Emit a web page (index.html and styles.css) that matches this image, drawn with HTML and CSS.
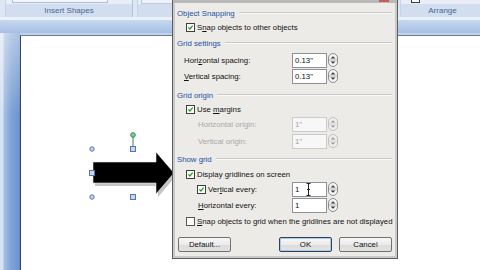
FILE: index.html
```html
<!DOCTYPE html>
<html lang="en">
<head>
    <meta charset="UTF-8">
    <meta name="viewport" content="width=device-width, initial-scale=1.0">
    <title>Drawing Grid</title>
    <link rel="stylesheet" href="styles.css">
</head>
<body>
    <svg class="defs" width="0" height="0">
        <symbol id="spinner" viewBox="0 0 10 14">
            <rect x="0.5" y="0.5" width="9" height="13" rx="4.5" fill="#f3f3f3" stroke="#8d8d8d"/>
            <line x1="1" y1="7" x2="9" y2="7" stroke="#b5b5b5"/>
            <path d="M2.6 5.6 L5 3.2 L7.4 5.6 Z" fill="#3a3a3a"/>
            <path d="M2.6 8.4 L5 10.8 L7.4 8.4 Z" fill="#3a3a3a"/>
        </symbol>
        <symbol id="tick" viewBox="0 0 9 9">
            <path d="M1.8 4.4 L3.7 6.4 L7.3 2.2" fill="none" stroke="#1f9a1f" stroke-width="1.6"/>
        </symbol>
    </svg>

    <div class="app">
        <div class="ribbon">
            <div class="group group-shapes">
                <div class="group-tools"><span class="gallery"></span></div>
                <div class="group-label">Insert Shapes</div>
            </div>
            <div class="group group-text">
                <div class="group-tools"><span class="tool-btn"></span></div>
                <div class="group-label"></div>
            </div>
            <div class="group group-arrange">
                <div class="group-tools"><span class="wrap-icon"></span></div>
                <div class="group-label">Arrange</div>
            </div>
        </div>
        <div class="band"></div>
        <div class="workspace">
            <div class="sidebar"></div>
            <div class="page"></div>
        </div>
    </div>

    <!-- block arrow shape, selected -->
    <svg class="shape" width="96" height="80" viewBox="84 128 96 80">
        <polygon points="95,165 158,165 158,155 176,176 158,197 158,186 95,186" fill="#c4c4c4"/>
        <polygon points="93,162 156,162 156,152 174,173 156,194 156,183 93,183" fill="#000" stroke="#e6e6e6" stroke-width="0.6"/>
        <line x1="133" y1="137" x2="133" y2="147" stroke="#3d7d5a" stroke-width="1"/>
        <circle cx="133" cy="135" r="2.3" fill="#7fd18e" stroke="#2f8a4f" stroke-width="1"/>
        <circle cx="92" cy="149" r="2.2" fill="#c9d6ec" stroke="#5675ad" stroke-width="1"/>
        <circle cx="92" cy="197" r="2.2" fill="#c9d6ec" stroke="#5675ad" stroke-width="1"/>
        <rect x="130.5" y="146.5" width="5" height="5" fill="#c9d6ec" stroke="#5675ad"/>
        <rect x="130.5" y="194.5" width="5" height="5" fill="#c9d6ec" stroke="#5675ad"/>
        <rect x="89.5" y="170.5" width="5" height="5" fill="#c9d6ec" stroke="#5675ad"/>
    </svg>

    <div class="dialog">
        <div class="titlebar"><span class="close"></span></div>

        <div class="hdr">Object Snapping</div>
        <div class="check-row"><span class="box"><svg><use href="#tick"/></svg></span><span>S<u>n</u>ap objects to other objects</span></div>

        <div class="hdr mt2">Grid settings</div>
        <div class="field-row mt2">
            <span class="field-label"><span>Hori<u>z</u>ontal spacing:</span></span>
            <span class="spin"><span class="spin-box">0.13"</span><svg class="spin-btn"><use href="#spinner"/></svg></span>
        </div>
        <div class="field-row">
            <span class="field-label"><span><u>V</u>ertical spacing:</span></span>
            <span class="spin"><span class="spin-box">0.13"</span><svg class="spin-btn"><use href="#spinner"/></svg></span>
        </div>

        <div class="hdr mt4">Grid origin</div>
        <div class="check-row"><span class="box"><svg><use href="#tick"/></svg></span><span>Use <u>m</u>argins</span></div>
        <div class="field-row sub disabled">
            <span class="field-label"><span>Horizontal origin:</span></span>
            <span class="spin"><span class="spin-box">1"</span><svg class="spin-btn"><use href="#spinner"/></svg></span>
        </div>
        <div class="field-row sub disabled mt1">
            <span class="field-label"><span>Vertical origin:</span></span>
            <span class="spin"><span class="spin-box">1"</span><svg class="spin-btn"><use href="#spinner"/></svg></span>
        </div>

        <div class="hdr mt3">Show grid</div>
        <div class="check-row mt1"><span class="box"><svg><use href="#tick"/></svg></span><span>Display <u>g</u>ridlines on screen</span></div>
        <div class="field-row sub">
            <span class="field-label"><span class="box"><svg><use href="#tick"/></svg></span><span>Ver<u>t</u>ical every:</span></span>
            <span class="spin"><span class="spin-box">1<svg class="ibeam" width="5" height="13" viewBox="0 0 5 13"><path d="M0.5 0.5 H4.5 M2.5 0.5 V12.5 M0.5 12.5 H4.5 M1 6.5 H4" stroke="#222" fill="none"/></svg></span><svg class="spin-btn"><use href="#spinner"/></svg></span>
        </div>
        <div class="field-row sub">
            <span class="field-label"><span><u>H</u>orizontal every:</span></span>
            <span class="spin"><span class="spin-box">1</span><svg class="spin-btn"><use href="#spinner"/></svg></span>
        </div>
        <div class="check-row mt1"><span class="box empty"></span><span><u>S</u>nap objects to grid when the gridlines are not displayed</span></div>

        <div class="buttons">
            <button class="btn">Default...</button>
            <button class="btn btn-ok">OK</button>
            <button class="btn">Cancel</button>
        </div>
    </div>
</body>
</html>
```

FILE: styles.css
```css
* {
    box-sizing: border-box;
}

body {
    margin: 0;
    width: 480px;
    height: 270px;
    overflow: hidden;
    position: relative;
    font-family: "Liberation Sans", Arial, sans-serif;
    background: #ffffff;
}

.defs {
    position: absolute;
}

.app {
    display: flex;
    flex-direction: column;
    height: 270px;
}

/* ribbon */
.ribbon {
    display: flex;
    height: 20px;
    padding-left: 5px;
    background: #dde7f4;
    border-bottom: 3px solid #eaf1fa;
}

.group {
    display: flex;
    flex-direction: column;
    flex-shrink: 0;
    border-left: 1px solid #c6d4e8;
    border-right: 1px solid #b1c3de;
}

.group-shapes {
    width: 128px;
}

.group-text {
    width: 260px;
    margin-left: 4px;
}

.group-arrange {
    width: 85px;
    margin-left: 3px;
}

.group-tools {
    height: 4px;
    background: #e7eef8;
    position: relative;
}

.gallery {
    position: absolute;
    left: 6px;
    right: 24px;
    top: -2px;
    height: 5px;
    border: 1px solid #aebfd8;
    background: #f2f6fb;
}

.tool-btn {
    position: absolute;
    left: 3px;
    right: 0;
    top: -2px;
    height: 6px;
    border: 1px solid #b9c9e0;
    background: #eef3fa;
}

.wrap-icon {
    position: absolute;
    left: 10px;
    top: -3px;
    width: 9px;
    height: 6px;
    border: 1px solid #3b3b3b;
    background: #ffffff;
}

.group-label {
    height: 13px;
    line-height: 13px;
    text-align: center;
    font-size: 8px;
    color: #4a6590;
    background: #d2def0;
}

.band {
    height: 13px;
    background: linear-gradient(#c7d8ef, #a6c0e5);
}

.workspace {
    flex: 1;
    display: flex;
    background: #c2d3ec;
}

.sidebar {
    width: 20px;
    background:
        linear-gradient(rgba(255, 255, 255, 0.45), rgba(255, 255, 255, 0) 35%),
        linear-gradient(90deg, #d7e2f2 0, #d7e2f2 3px, #a5bee3 4px, #7fa3d6 11px, #6d94cc 19px, #5a7fb8 20px);
}

.page {
    flex: 1;
    margin-top: 2px;
    background: #ffffff;
    border-top: 1px solid #6d7c93;
    border-left: 1px solid #3b4658;
}

/* arrow shape */
.shape {
    position: absolute;
    left: 84px;
    top: 128px;
}

/* dialog */
.dialog {
    position: absolute;
    left: 172px;
    top: 0;
    width: 226px;
    height: 259px;
    padding: 0 5px 0 4px;
    display: flex;
    flex-direction: column;
    background: #ecebe8;
    border: 1px solid #5e5e5e;
    border-top: none;
    box-shadow: inset 0 0 0 2px #c9c9c9;
    font-size: 7.8px;
    color: #111111;
}

.titlebar {
    height: 3px;
    margin: 0 -5px 0 -4px;
    background: #b9b9b9;
    position: relative;
}

.close {
    position: absolute;
    left: 206px;
    top: 0;
    width: 10px;
    height: 2px;
    background: #c95a58;
}

.hdr {
    height: 14px;
    margin-top: 3px;
    display: flex;
    align-items: center;
    color: #2350a3;
}

.hdr::after {
    content: "";
    flex: 1;
    margin-left: 4px;
    border-top: 1px solid #c8c8c8;
    border-bottom: 1px solid #fafafa;
}

.mt1 {
    margin-top: 1px;
}

.mt2 {
    margin-top: 2px;
}

.mt3 {
    margin-top: 3px;
}

.mt4 {
    margin-top: 4px;
}

.check-row {
    height: 14px;
    padding-left: 9px;
    display: flex;
    align-items: center;
    white-space: nowrap;
}

.box {
    width: 9px;
    height: 9px;
    margin-right: 2px;
    flex-shrink: 0;
    border: 1px solid #3e3e3e;
    background: #ffffff;
    display: inline-block;
}

.box svg {
    display: block;
    width: 7px;
    height: 7px;
}

.box.empty {
    border-color: #555555;
}

.field-row {
    height: 16px;
    padding-left: 7px;
    padding-right: 54px;
    display: flex;
    align-items: center;
}

.field-row.sub {
    padding-left: 20px;
}

.field-label {
    flex: 1;
    display: flex;
    align-items: center;
    white-space: nowrap;
}

.sub .field-label {
    padding-left: 1px;
}

.sub .field-label .box {
    margin-left: -1px;
}

.spin {
    display: flex;
    align-items: center;
    width: 46px;
    height: 15px;
}

.spin-box {
    position: relative;
    width: 35px;
    height: 15px;
    padding-left: 2px;
    line-height: 13px;
    border: 1px solid #8f9399;
    background: #ffffff;
}

.spin-btn {
    width: 10px;
    height: 14px;
    margin-left: 1px;
}

.ibeam {
    position: absolute;
    left: 13px;
    top: 0;
}

.disabled .field-label {
    color: #a9a9a9;
}

.disabled .spin-box {
    color: #a3a3a3;
    border-color: #cbcbcb;
    background: #f7f7f7;
}

.disabled .spin-btn {
    opacity: 0.45;
}

.buttons {
    display: flex;
    height: 15px;
    margin-top: 9px;
    padding-left: 1px;
    gap: 7px;
}

.btn {
    width: 53px;
    height: 15px;
    padding: 0;
    border: 1px solid #717171;
    border-radius: 2px;
    background: linear-gradient(#f7f7f7, #ebebeb 50%, #dcdcdc 51%, #e2e2e2);
    font-family: "Liberation Sans", Arial, sans-serif;
    font-size: 7.8px;
    color: #111111;
}

.btn-ok {
    margin-left: auto;
    border-color: #33425c;
    box-shadow: inset 0 0 0 1px #a9cbe6;
}
```
